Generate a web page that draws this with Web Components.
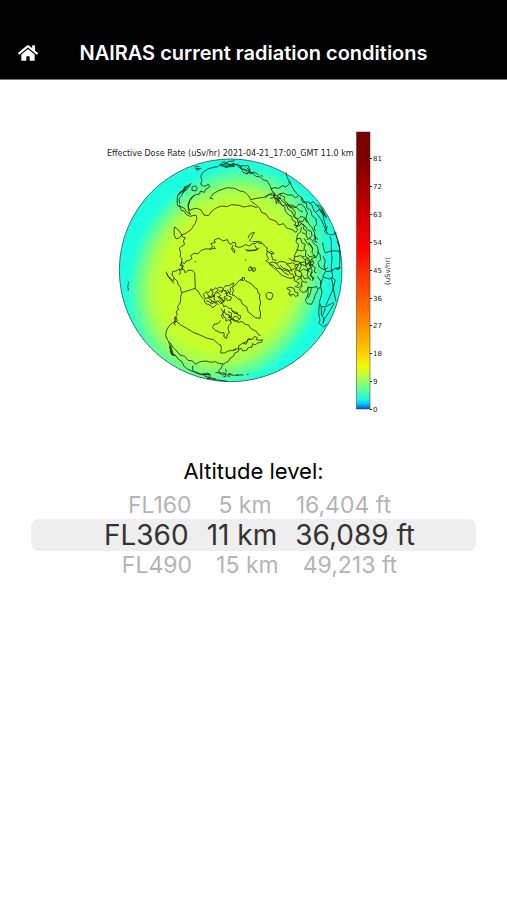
<!DOCTYPE html>
<html lang="en">
<head>
<meta charset="utf-8">
<meta name="viewport" content="width=device-width, initial-scale=1">
<title>NAIRAS current radiation conditions</title>
<style>
  body {
    margin: 0;
    background: #fff;
    color: #000;
    font-family: Inter, "Liberation Sans", sans-serif;
  }
</style>
</head>
<body>
<radiation-app>
  <nav-bar slot="header">NAIRAS current radiation conditions</nav-bar>
  <dose-map caption="Effective Dose Rate (uSv/hr) 2021-04-21_17:00_GMT 11.0 km" unit="(uSv/hr)"></dose-map>
  <altitude-picker>
    <span slot="label">Altitude level:</span>
  </altitude-picker>
</radiation-app>

<script>
class RadiationApp extends HTMLElement {
  constructor() {
    super();
    this.attachShadow({mode: 'open'}).innerHTML = `
      <style>
        :host { display: block; }
        main {
          display: flex;
          flex-direction: column;
          gap: 40px;
          padding: 45px 31px 32px;
        }
      </style>
      <slot name="header"></slot>
      <main><slot></slot></main>
    `;
  }
}

class NavBar extends HTMLElement {
  constructor() {
    super();
    this.attachShadow({mode: 'open'}).innerHTML = `
      <style>
        :host { display: block; }
        header {
          display: grid;
          grid-template-columns: 40px 1fr 40px;
          align-items: center;
          padding: 26px 18px 0;
          height: 53px;
          background: #000;
          color: #fff;
          border-bottom: 1px solid #777;
        }
        a { display: flex; color: inherit; }
        svg { width: 20px; height: 18px; fill: currentColor; }
        h1 {
          margin: 0;
          font-size: 20px;
          line-height: 24px;
          font-weight: 600;
          text-align: center;
        }
      </style>
      <header>
        <a href="#" aria-label="Home">
          <svg viewBox="0 0 576 512"><path d="M280.37 148.26L96 300.11V464a16 16 0 0 0 16 16l112.06-.29a16 16 0 0 0 15.92-16V368a16 16 0 0 1 16-16h64a16 16 0 0 1 16 16v95.64a16 16 0 0 0 16 16.05L464 480a16 16 0 0 0 16-16V300L295.67 148.26a12.19 12.19 0 0 0-15.3 0zM571.6 251.47L488 182.56V44.05a12 12 0 0 0-12-12h-56a12 12 0 0 0-12 12v72.61L318.47 43a48 48 0 0 0-61 0L4.34 251.47a12 12 0 0 0-1.6 16.9l25.5 31A12 12 0 0 0 45.15 301l235.22-193.74a12.19 12.19 0 0 1 15.3 0L530.9 301a12 12 0 0 0 16.9-1.6l25.5-31a12 12 0 0 0-1.7-16.93z"/></svg>
        </a>
        <h1><slot></slot></h1>
      </header>
    `;
  }
}

// Land outlines and borders, in thirds of a chart pixel.
const COASTS = [
  // east and north Asia
  'M302 178l4-12-4-12 8-13 14-9 16-5 14-2 6-7 10 2 8-6 12 5 10-4 12 6 8 9 11 3 12 10 16 3 9 8 14 2 6 8 14 4 8 14 6 16 8 6-3 12 6 8 2 12 8-4 10 10 14-3 12 6 16 2 10 10 10 4',
  'M302 178l10 6 14-6 3 8-12 7-4 9-12-4-2 9-13 2-10 9-8 12-3 16 4 10 9-4 14-2 12 6 8 14 14 2 7-11 12-10 18-8 18 2 14-6 22 2 14 5 22-4 18 6',
  'M340 222l-10-2 10-14 18-10 24-8 22 2 16 8 14 3 11 11 7 12 18-4 20-3 18-8 22 3 14-6',
  'M452 228l14 10 14 12 4 12 14 5 10 15 20 6 8 12 14-4 12 14 14 4 12 8 5-8-6-8 8-6 3-12 10 2 6-10',
  'M282 210l-10 10-8 18 1 16 6 14-10-6-8-12-8-4-12-4-2-14 2-16 8-12 10-4 2-10 14-6 6-4-10 14-12 8-6 14-8 10 2 14',
  'M232 214l14-14 10-10 12-8M240 206l18-20M248 204l14-12M276 186l10-4 6 8-4 8-12-2zM238 240l6 16 8 2 6 10 12 6',
  'M270 274l18-4 3 10-6 16-12 18-14 10-14 6-6 8-10 4-6-10-1-16 2-10 8 6 10 12 6 12 8 2-6 10 4 10-10 6-6 6 4 14-2 10 6 8-2 14 6 8-4 8-8 4 4 8-6 6',
  'M284 126l14-2M286 131l18-1M288 135l10-1M362 116l10-5 12 2M360 122l20 3 12-6 10 4M374 127l30-3M384 110l20-3M396 117l22 3 4 10M366 119l38 3',
  'M422 122l12 1 10-2 6 14-8 12-12-4-6-14zM430 132l14 4 10 10M440 128l16 16M456 142l12 2 8 6M482 150l6 4',
  // Arctic coast
  'M240 422l6-10 8 4 4-8 10-2 8-6-4-8 10-7 12 1 10-10 12-4 16 0 6-8-6-8 14-4-4-6 12-6 8 3 6 5 14-4 4 10 8 4 4-6 10 2-2 10 10 3 10-2 10-6 12 4 8-6 12-2 6-6 12 3',
  'M400 360l-4 8 8 6 0 10-6-6-4-10M330 374l8-4 8 2-4-8M444 340l4-10 8-6 8-2-6 8-4 10-6 6 6 4M458 351l12-2 8 6 12 2 4 6 8 6-2 8 12 8 10 2-4-6-8-3M436 374l14 2 16-1 12-6M440 378l20-1 14-4M464 361l6 10M284 410h4M435 405h4M445 430l8-6 4 6 8-2 2 8-8 4-4-6-8 4zM450 428l12 8',
  // north Europe
  'M502 377l-2 14 6 10-8 6 10 8 10-4 12 4 10-6 14 2 10 6 14-4 8 6 10 2-8 10-12 2-10 6-16-4-10-4-12-2-8-8-12-2M508 414l12 14 14 10 10 12 14 6 12 4 12-2 6-8-4-12 8-8-10-8M506 380l8 8 4 16 12 2M540 420l10 10 14 4 6 12 10 2M558 416l12 10 6 14M526 412l14 16 14 16 12 6M566 400l10 6 12 2',
  'M560 490l10-4 12 4 2 10 10 4 0 8-8 2-6-6-8 2-6-6 6-6zM574 514l-8-6M584 484l12 4 8-8M498 508l6-6 12 2 3 8-6 12-10-2-4-6z',
  'M582 410l2-20 8-16 4-14-8-10 2-8 12-2 4 14 10 4-4 12 6 8-2 16 10 6 4 12-10 4-8-6-10 4-10-6-6 4M590 374l14 4 10-4M584 396l16-4 14 4M586 420l14-4 14 6 12-6 10 8M588 434l12 6 10-8 14 6 8-10M584 446l10 10 14-4 6 10 12-4 6 8M590 466l12-8 6 12 14 2M600 410l4 12-6 14 8 10-4 14M616 404l2 20 6 10-2 18 8 10M634 404l-4 16 6 16-4 14 8 14M580 450l4 18 14 6-8 10',
  // central Asia and Middle East
  'M496 220l8-10 14-6 8 4-6 10-10 2M512 192l12-4 12 2 12-8 10 4 10-10-2-10-6-12-2-12M536 208l14-4 12 6 14 0 10 8 8-4M528 218l10 8 6 12 10 8 2 12 10 12 8 4 4 12 10 6-4 8 8 4 4-6-4-14-8-10 2-12-8-12-10-4-6-12-10-8 2-10-14-6M536 214l12 16 10 6 6 16 12 8 6 16 12 6M520 210l16 20-4-18M524 222l18-4-14 14',
  'M570 168l4 14 10 16 10 12 12 8 6 12 14 2 10 8 6 18 10 10 12 16 8 18 6 16 6 6M604 218l2 12 14 6 0 12 12 8 4 16 12 10 2 16-8 8 4 12M564 240l12 0 12 8 8-10 10 0 10 12 6 14-4 16 8 16 10 12 8 16 2 20M582 300l14 4 8-8 8 6-2 10 10 6-2 14 6 8M594 284l8-10 12 4 6 14M604 306l-2 14-10 10-2 16M614 302l8 12 12 6 2 12-8 8M620 344l10-4 8 8 8-10M606 322l10 6M608 296l8 8M598 290l10 8M642 330l6 12-4 8 8 2M646 334l8 10M612 340l10 16 12 6 4 12M626 352l12 18-2 12 10 12M636 350l16 14 4 18-8 16',
  'M628 236l12-6 8 10 10 2 8 8 6 14 8 14-6-4-10-16M646 262l12-8 10 14 6 24 6 22-8 6M652 242l20 30M662 250l14 22',
  // Africa and the Mediterranean
  'M672 318l8 8 14 4 16-6M678 316l4-12M690 334l4 14 0 20 0 10M668 352l2 16 6 16 16-6 20 0 8 2M694 378l2 20-2 28 4 30M650 380l10 8 2 16-8 8 4 14 14 8 12-6M670 394l6 14-4 16 6 16 16-2 12-8 16-2M676 440l-8 16 20 6 10-4 8 8M668 460l-6 20M706 466l-10 34-18 40M694 456l8 44 6 30M646 396l-12 6 8 10-6 10 10 6-4 12 8 4M640 420l-12-4 4 12-10 6 8 8M638 440l-8 12 12 6-6 10M620 404l10 8 10-2M606 396l8 8 10-4M622 388l8 8 12-4 6 8',
  'M624 486l14 2 12-4 4 10-8 14-4 16-8 14-12-2-6-10 8-16zM634 488l-2 14-8 18M604 470l2 14-8 10 10 8 10-2 8-14M652 454l10 14 0 16-6 8M662 484l4 20-8 28 6 14 0 22 8 14-4 12M658 536l-2 30 4 20-4 8 10 8 6 4 8-10M664 546l16-2 22-12M676 548l-8 24M702 536l-18 30-12 18-2 12',
  'M704 320l14 40 2 40-2 30-8 4M712 350l6 14M706 430l12 2',
  // Alaska and the Canadian coast
  'M244 436l-6-4-10 6-10 2-2 10 6 8-2 10-8-8-8-6-6-14M200 446l10 16 12 14M222 460l10 8 2 10 8 10 0 8 4 6-4 12 0 14-4 10-6 8 4 8-8 6 4 10-8 8 2 8-4 6 4 10',
  'M240 422l8 0-4 10 8 2 4 10 8-8 12 0 8 8 2 48 8 6 8 14 6 8M245 503l41-13M224 584l4-8 4 12-6 4z',
  'M227 590l-14 6-8 10-6 12-2 14 6 14 8 8M230 590l12 10 18 10 20 12 20 8 22 10 20 4 14 14 6 2 2 10-2 14 12 0 10-6 14-2 10-2',
  'M398 678l8-6 10 0 0-10 10-6 12-6 8-6 12-2 6-8 8 4-4 6 12 2 8-2-4 8-12 2-6 6-8-4-2 10-12 2-4 8-12 2-4-8-6 2',
  'M430 654l8 4 4-8M442 650l2-8 8 0M418 672l-4 8-10 4-4 10-10 6-4 8-10 6-10 8-2 8-8 6 2 8 10 6 8-4 0 10-6-2',
  // Hudson Bay, Labrador
  'M362 586l-8 10-12 2-4 10 8 8 10 4 8 4 8-2 0 14 8 4 2-12 6-4-4-14 2-8 8-8-4-10 6-2 12 6 6 4 12-2 10 8 10 2 6 10 10 6 8 4 4 8 8 4',
  // Arctic archipelago
  'M314 518l-4-10 8-8 6 4 8-8 8 4-4 8 6 4-8 6-8-4-6 8zM312 520l2 12 8 6 8 2 6 8 8-4 6-6-6-6-8 4-2-10-8-6M330 492l10 2 8-6 6 8-8 6M352 490l8-4 10 4-2 8-12 0M344 506l10-4 8 8-6 8 8 4 6 10-8 4-8-8-6 2-6-8zM364 504l6-10 8 6 2 12-8 4 4 10-8 4M318 528l10 2 6 8M334 528l14 4 8 8M352 514l14 6 6 10M372 488l4-6 12 0 8-6 6-2-4 10-8 6 2 10-10 6-4-8-6-2M376 504l10 10 8 2-2 10-10 0-4-8M382 494l10 16M358 524l10 14 6 8M320 506l12 10M324 520l12-8 8 4',
  'M370 546l8-4 8 8 8 0 4 10 12 2 4 8 8 2-2 10-10 6-8 0-2-8-8-2-4-8-10-2-6-8 2-8M374 558l-6 8 4 10 6 4 0 8 8-4 8 6M384 560l10 4 0 12-10 2M396 556l8 10 10-2M400 576l10-2 8 8M362 550l8 12-6 10 6 10M386 572l12 14',
  // Greenland
  'M428 462l-10 4-8 10-12 12 2 10-4 12 8 2 10 10 8 2 4 12 14 10 4 14 12 10 10 8 14 2 2-16-4-12 4-22-4-10 2-12-6-4-2-12-8-4-8-10-10-6-8-4-6-6 2-4-8 0 2 6M420 464l12 4',
  // Mexico, Central America, Caribbean
  'M206 650l6 20 4 14 12 8 6 10 12 8 6 14 10 8 14 6 14 4 14 6 16 0M210 654l10 14 10 10 10 12 14 4 10 12 14 2 8 10 14-8 18-2 14 4 14-2 12 6 12 0M208 664l8 24 10 6M212 660l8 32M278 722l0 14 10 8 14 4 12 2 8-6 8 4 0 8-10 4M210 676l4 12 8 4M302 748l14 2 12-2M308 744l20 6M314 754l16 4 18 4M322 760l24 4 36 5',
  'M346 742l12 2 14 0 8 3M376 732l4 10M382 748l22 3 12-1M410 750l20 0M440 748h6M380 752l10 2M386 745l8 2',
  // Hawaii
  'M84 470l3 6M84 478v8M82 488l4 2-2 7'
];

class DoseMap extends HTMLElement {
  constructor() {
    super();
    const caption = this.getAttribute('caption');
    const unit = this.getAttribute('unit');
    const ticks = [81, 72, 63, 54, 45, 36, 27, 18, 9, 0].map((value, i) => {
      const y = Math.round(33 + i * 27.9);
      return `<path d="M270 ${y + .5}h2" stroke="#222"/><text x="273" y="${y + 3}">${value}</text>`;
    }).join('');

    this.attachShadow({mode: 'open'}).innerHTML = `
      <style>
        :host { display: flex; justify-content: center; }
        svg { width: 307px; max-width: 100%; height: auto; }
        text { font-family: "DejaVu Sans", sans-serif; fill: #222; }
        .caption { font-size: 8px; }
        .scale { font-size: 7px; }
        .unit { font-size: 7px; text-anchor: middle; }
        .coasts {
          fill: none;
          stroke: #16220a;
          stroke-opacity: .8;
          stroke-width: 3;
          stroke-linejoin: round;
        }
      </style>
      <svg viewBox="0 0 307 290" role="img" aria-label="${caption}">
        <defs>
          <radialGradient id="dose" gradientUnits="userSpaceOnUse" cx="0" cy="0" r="1"
            gradientTransform="translate(382 456) rotate(28) scale(302 365)">
            <stop offset="0" stop-color="#c9ff2b"/>
            <stop offset=".62" stop-color="#c6ff2c"/>
            <stop offset=".74" stop-color="#a4ff54"/>
            <stop offset=".86" stop-color="#58ffa0"/>
            <stop offset=".95" stop-color="#20ffdc"/>
            <stop offset="1" stop-color="#1cffe0"/>
          </radialGradient>
          <linearGradient id="jet" x1="0" y1="1" x2="0" y2="0">
            <stop offset="0" stop-color="#1450b4"/>
            <stop offset=".008" stop-color="#0a80e8"/>
            <stop offset=".018" stop-color="#00c4ff"/>
            <stop offset=".035" stop-color="#20f4e0"/>
            <stop offset=".07" stop-color="#60ff98"/>
            <stop offset=".11" stop-color="#a8ff50"/>
            <stop offset=".155" stop-color="#f0fa08"/>
            <stop offset=".2" stop-color="#ffd000"/>
            <stop offset=".3" stop-color="#ff9000"/>
            <stop offset=".4" stop-color="#ff5a00"/>
            <stop offset=".5" stop-color="#ff2c00"/>
            <stop offset=".57" stop-color="#fa0400"/>
            <stop offset=".7" stop-color="#d00000"/>
            <stop offset=".8" stop-color="#a40000"/>
            <stop offset=".9" stop-color="#800000"/>
            <stop offset="1" stop-color="#780000"/>
          </linearGradient>
        </defs>
        <g transform="scale(.33333)">
          <circle cx="392" cy="436" r="334" fill="url(#dose)" stroke="#24524a" stroke-width="2.4"/>
          <path class="coasts" d="${COASTS.join('')}"/>
        </g>
        <text class="caption" x="7" y="31">${caption}</text>
        <rect x="256.5" y="7" width="13.5" height="277" fill="url(#jet)" stroke="#333" stroke-width=".5"/>
        <g class="scale">${ticks}</g>
        <text class="unit" transform="translate(290 146) rotate(-90)">${unit}</text>
      </svg>
    `;
  }
}

class AltitudePicker extends HTMLElement {
  constructor() {
    super();
    const levels = [
      ['FL160', '5 km', '16,404 ft'],
      ['FL360', '11 km', '36,089 ft'],
      ['FL490', '15 km', '49,213 ft']
    ];
    const rows = levels.map(([level, km, ft], i) => `
      <label>
        <input type="radio" name="altitude" value="${level}" ${i === 1 ? 'checked' : ''}>
        <span>${level}</span><span class="km">${km}</span><span>${ft}</span>
      </label>
    `).join('');

    this.attachShadow({mode: 'open'}).innerHTML = `
      <style>
        :host { display: block; }
        fieldset { margin: 0; padding: 0; border: 0; min-width: 0; }
        legend {
          width: 100%;
          padding: 0;
          margin-bottom: 4px;
          font-size: 22px;
          line-height: 32px;
          text-align: center;
        }
        label {
          display: flex;
          justify-content: center;
          align-items: center;
          gap: 24px;
          height: 28px;
          padding-left: 12px;
          font-size: 23px;
          line-height: 28px;
          color: #b4b4b4;
          border-radius: 8px;
          white-space: nowrap;
        }
        label:has(:checked) {
          gap: 18px;
          height: 32px;
          font-size: 28px;
          line-height: 32px;
          color: #333;
          background: #eee;
        }
        label:has(:focus-visible) { outline: 2px solid #4a90e2; }
        input {
          appearance: none;
          position: absolute;
          width: 1px;
          height: 1px;
          margin: 0;
          opacity: 0;
        }
        .km { min-width: 56px; text-align: right; }
      </style>
      <fieldset>
        <legend><slot name="label"></slot></legend>
        ${rows}
      </fieldset>
    `;
  }
}

customElements.define('radiation-app', RadiationApp);
customElements.define('nav-bar', NavBar);
customElements.define('dose-map', DoseMap);
customElements.define('altitude-picker', AltitudePicker);
</script>
</body>
</html>
